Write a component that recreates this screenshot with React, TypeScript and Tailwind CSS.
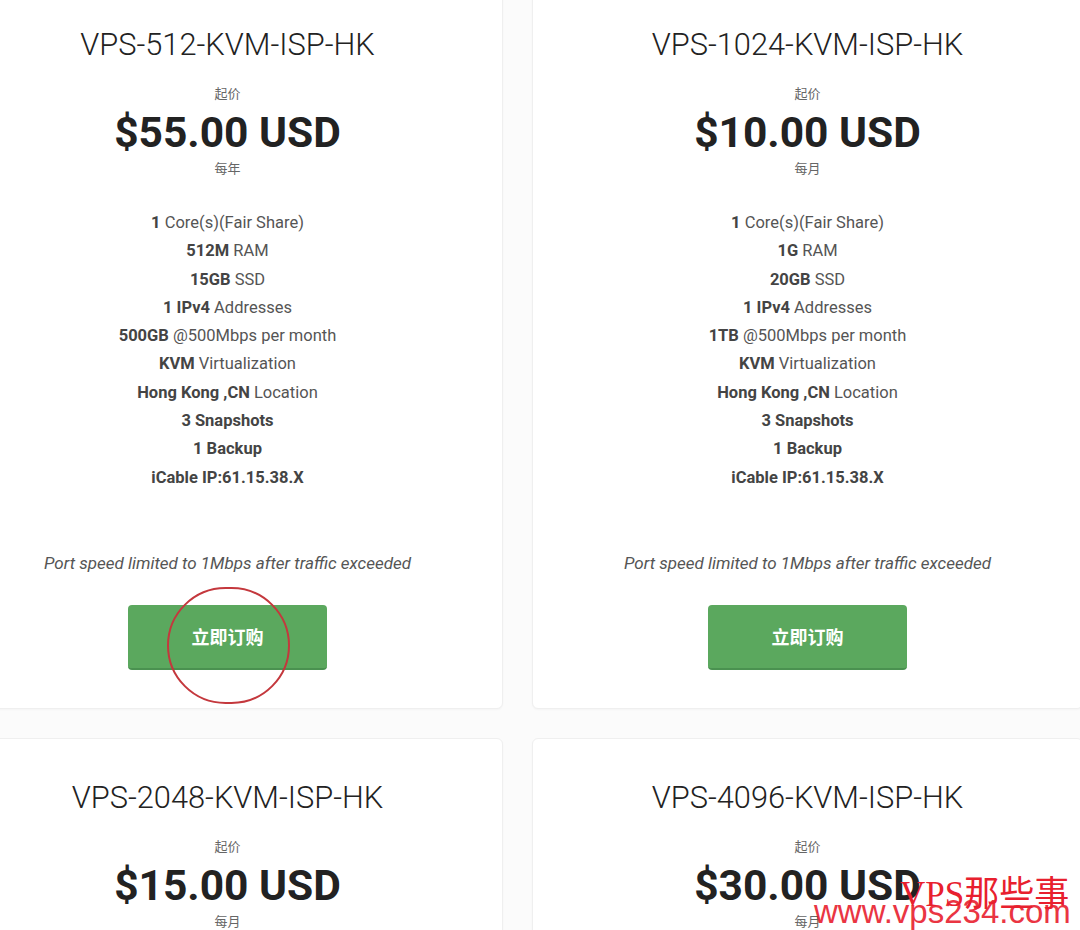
const plans = [
  {
    name: "VPS-512-KVM-ISP-HK",
    price: "$55.00 USD",
    cycle: "每年",
    ram: "512M",
    disk: "15GB",
    traffic: "500GB",
    marked: true,
  },
  {
    name: "VPS-1024-KVM-ISP-HK",
    price: "$10.00 USD",
    cycle: "每月",
    ram: "1G",
    disk: "20GB",
    traffic: "1TB",
    marked: false,
  },
  {
    name: "VPS-2048-KVM-ISP-HK",
    price: "$15.00 USD",
    cycle: "每月",
    ram: "2G",
    disk: "30GB",
    traffic: "2TB",
    marked: false,
  },
  {
    name: "VPS-4096-KVM-ISP-HK",
    price: "$30.00 USD",
    cycle: "每月",
    ram: "4G",
    disk: "40GB",
    traffic: "3TB",
    marked: false,
  },
];

type Plan = (typeof plans)[number];

function Feature({ b, rest }: { b: string; rest?: string }) {
  return (
    <p className="leading-[28.3px]">
      <span className="font-bold text-[#444]">{b}</span>
      {rest ? ` ${rest}` : ""}
    </p>
  );
}

function PlanCard({ plan }: { plan: Plan }) {
  return (
    <div className="bg-white border border-[#efefef] rounded-md shadow-[0_1px_2px_rgba(0,0,0,0.03)] flex flex-col items-center pt-[41px] pb-[38px]">
      <h3 className="text-[30.8px] leading-[36px] font-light text-[#222]">
        {plan.name}
      </h3>
      <p className="mt-[20px] text-[13px] leading-[20px] text-[#666] font-['Noto_Sans_CJK_SC',sans-serif]">
        起价
      </p>
      <p className="mt-[6px] text-[42.5px] leading-[48px] font-bold text-[#222]">
        {plan.price}
      </p>
      <p className="mt-[1px] text-[13px] leading-[20px] text-[#666] font-['Noto_Sans_CJK_SC',sans-serif]">
        {plan.cycle}
      </p>
      <div className="mt-[31px] flex flex-col items-center text-[16.5px] text-[#555]">
        <Feature b="1" rest="Core(s)(Fair Share)" />
        <Feature b={plan.ram} rest="RAM" />
        <Feature b={plan.disk} rest="SSD" />
        <Feature b="1 IPv4" rest="Addresses" />
        <Feature b={plan.traffic} rest="@500Mbps per month" />
        <Feature b="KVM" rest="Virtualization" />
        <Feature b="Hong Kong ,CN" rest="Location" />
        <Feature b="3 Snapshots" />
        <Feature b="1 Backup" />
        <Feature b="iCable IP:61.15.38.X" />
      </div>
      <p className="mt-[59px] text-[17px] leading-[24px] italic text-[#555]">
        Port speed limited to 1Mbps after traffic exceeded
      </p>
      <div className="relative mt-[30px]">
        <button className="w-[199px] h-[65px] rounded-[4px] bg-[#5ba85e] border-b-2 border-[#4a9150] text-white text-[18px] font-bold font-['Noto_Sans_CJK_SC',sans-serif]">
          立即订购
        </button>
        {plan.marked && (
          <div className="absolute left-[39px] top-[-18px] w-[123px] h-[117px] rounded-full border-2 border-[#c4383d] pointer-events-none" />
        )}
      </div>
    </div>
  );
}

export default function App() {
  return (
    <div className="relative w-[1080px] h-[930px] overflow-hidden bg-[#fbfbfb] font-['Roboto',sans-serif]">
      <div className="grid grid-cols-[551px_551px] gap-x-[29px] gap-y-[29px] ml-[-48px] mt-[-15px]">
        {plans.map((p) => (
          <PlanCard key={p.name} plan={p} />
        ))}
      </div>
      <div className="absolute left-[814px] top-[876px] pointer-events-none text-[#e8202e]">
        <p className="ml-[86px] text-[35px] leading-[38px] font-['Liberation_Serif','Noto_Sans_CJK_SC',serif]">
          VPS那些事
        </p>
        <p className="mt-[-20px] text-[33px] leading-[36px] font-['Liberation_Sans',sans-serif] opacity-90">
          www.vps234.com
        </p>
      </div>
    </div>
  );
}
